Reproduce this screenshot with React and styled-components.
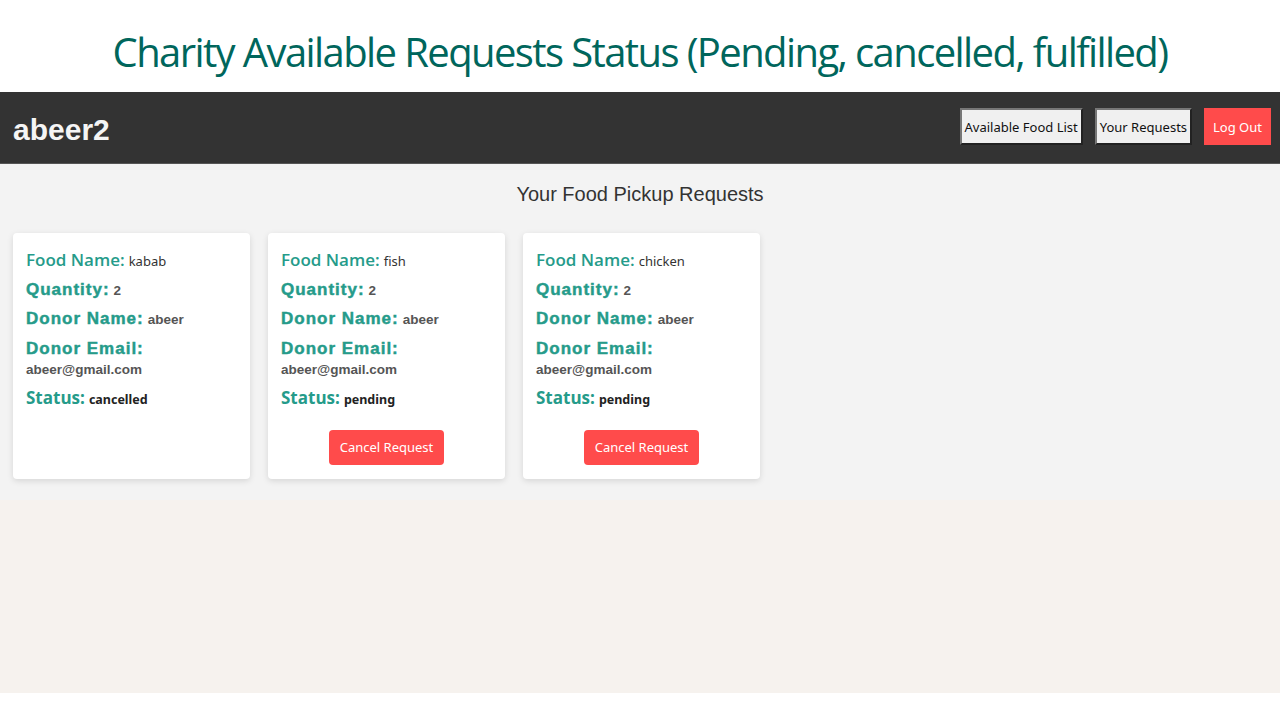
import React from "react";
import styled, { createGlobalStyle } from "styled-components";

const GlobalStyle = createGlobalStyle`
  html, body {
    margin: 0;
    padding: 0;
    background: #ffffff;
  }
  * { box-sizing: border-box; }
`;

const requests = [
  { food: "kabab", quantity: 2, donor: "abeer", email: "abeer@gmail.com", status: "cancelled" },
  { food: "fish", quantity: 2, donor: "abeer", email: "abeer@gmail.com", status: "pending" },
  { food: "chicken", quantity: 2, donor: "abeer", email: "abeer@gmail.com", status: "pending" },
];

export default function App() {
  return (
    <Slide>
      <GlobalStyle />
      <SlideTitle>Charity Available Requests Status (Pending, cancelled, fulfilled)</SlideTitle>
      <Screen>
        <NavBar>
          <Brand>abeer2</Brand>
          <NavActions>
            <NavButton>Available Food List</NavButton>
            <NavButton>Your Requests</NavButton>
            <NavButton $danger>Log Out</NavButton>
          </NavActions>
        </NavBar>
        <Main>
          <Heading>Your Food Pickup Requests</Heading>
          <CardRow>
            {requests.map((r, i) => (
              <Card key={i}>
                <Field>
                  <Label>Food Name:</Label> <Plain>{r.food}</Plain>
                </Field>
                <Field>
                  <Label $heavy>Quantity:</Label> <Strong>{r.quantity}</Strong>
                </Field>
                <Field>
                  <Label $heavy>Donor Name:</Label> <Strong>{r.donor}</Strong>
                </Field>
                <Field>
                  <Label $heavy>Donor Email:</Label> <Strong>{r.email}</Strong>
                </Field>
                <Field>
                  <Label $bold>Status:</Label> <StatusText>{r.status}</StatusText>
                </Field>
                {r.status === "pending" && (
                  <Actions>
                    <CancelButton>Cancel Request</CancelButton>
                  </Actions>
                )}
              </Card>
            ))}
          </CardRow>
        </Main>
        <Filler />
      </Screen>
    </Slide>
  );
}

const Slide = styled.div`
  width: 1280px;
  height: 720px;
  background: #ffffff;
  display: flex;
  flex-direction: column;
  overflow: hidden;
`;

const SlideTitle = styled.h1`
  margin: 0;
  height: 92px;
  display: flex;
  align-items: center;
  justify-content: center;
  padding-top: 10px;
  font-family: "Open Sans", sans-serif;
  font-weight: 400;
  font-size: 40px;
  letter-spacing: -1.6px;
  color: #00665c;
`;

const Screen = styled.div`
  height: 601px;
  display: flex;
  flex-direction: column;
`;

const NavBar = styled.header`
  height: 72px;
  background: #333333;
  display: flex;
  align-items: center;
  justify-content: space-between;
  padding: 0 9px 0 13px;
  border-bottom: 1px solid #555;
`;

const Brand = styled.div`
  font-family: "Liberation Sans", Arial, sans-serif;
  font-weight: 700;
  font-size: 30px;
  color: #f5f5f5;
  margin-top: 5px;
`;

const NavActions = styled.nav`
  display: flex;
  align-items: center;
  gap: 12px;
`;

const NavButton = styled.button`
  height: 37px;
  font-family: "Noto Sans", "Open Sans", sans-serif;
  font-size: 13px;
  color: ${(p) => (p.$danger ? "#ffffff" : "#111111")};
  background: ${(p) => (p.$danger ? "#ff4b4b" : "#f0f0f0")};
  border: ${(p) => (p.$danger ? "none" : "2px outset #777")};
  border-radius: 0;
  padding: ${(p) => (p.$danger ? "0 9px" : "0 3px")};
  margin-top: -2px;
  cursor: pointer;
`;

const Main = styled.main`
  background: #f3f3f3;
  padding: 19px 13px 21px;
`;

const Heading = styled.h2`
  margin: 0 0 27px;
  text-align: center;
  font-family: "Liberation Sans", Arial, sans-serif;
  font-weight: 400;
  font-size: 20px;
  color: #333333;
`;

const CardRow = styled.div`
  display: flex;
  gap: 18px;
`;

const Card = styled.div`
  width: 237px;
  height: 246px;
  background: #ffffff;
  border-radius: 4px;
  box-shadow: 0 2px 6px rgba(0, 0, 0, 0.12);
  padding: 17px 13px 0;
  display: flex;
  flex-direction: column;
`;

const Field = styled.div`
  margin-bottom: 8.5px;
  line-height: 20px;
  color: #555;
`;

const Label = styled.span`
  font-family: ${(p) => (p.$heavy ? `"Liberation Sans", Arial, sans-serif` : `"Open Sans", sans-serif`)};
  font-weight: ${(p) => (p.$heavy || p.$bold ? 700 : 600)};
  font-size: 17px;
  line-height: 20px;
  letter-spacing: ${(p) => (p.$heavy ? "1px" : "0")};
  -webkit-text-stroke: ${(p) => (p.$heavy ? "0.45px #259b8a" : "0")};
  color: #259b8a;
`;

const Plain = styled.span`
  font-family: "Noto Sans", "Open Sans", sans-serif;
  font-size: 13px;
  color: #333333;
`;

const Strong = styled.span`
  font-family: "Liberation Sans", Arial, sans-serif;
  font-weight: 700;
  font-size: 13.5px;
  color: #555555;
`;

const StatusText = styled.span`
  font-family: "Noto Sans", "Open Sans", sans-serif;
  font-weight: 700;
  font-size: 12.5px;
  color: #222222;
`;

const Actions = styled.div`
  display: flex;
  justify-content: center;
  margin-top: 11px;
`;

const CancelButton = styled.button`
  height: 35px;
  width: 115px;
  border: none;
  border-radius: 4px;
  background: #ff4b4b;
  color: #ffffff;
  font-family: "Noto Sans", "Open Sans", sans-serif;
  font-size: 13px;
  cursor: pointer;
`;

const Filler = styled.div`
  flex: 1;
  background: #f6f2ee;
`;
